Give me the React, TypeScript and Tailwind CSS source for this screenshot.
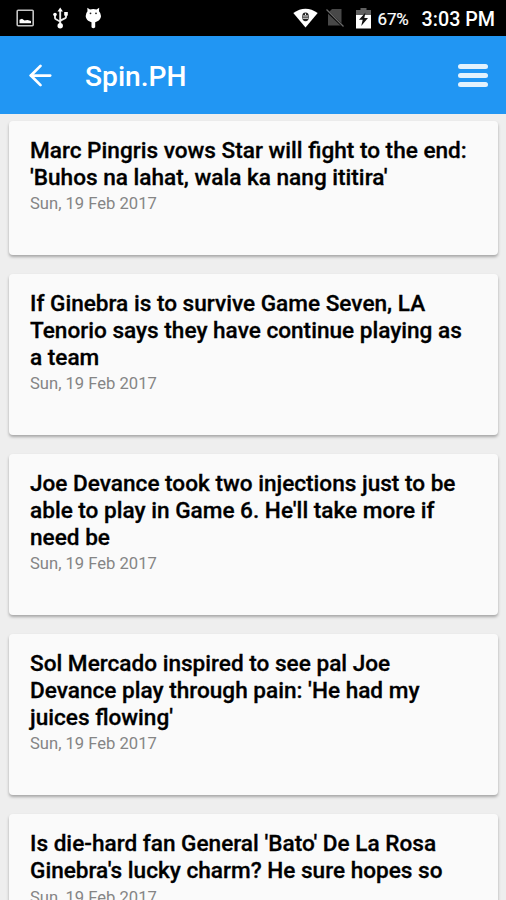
import { ArrowLeft } from "lucide-react";

type Article = {
  id: number;
  lines: string[];
  date: string;
};

const articles: Article[] = [
  {
    id: 1,
    lines: ["Marc Pingris vows Star will fight to the end:", "'Buhos na lahat, wala ka nang ititira'"],
    date: "Sun, 19 Feb 2017",
  },
  {
    id: 2,
    lines: ["If Ginebra is to survive Game Seven, LA", "Tenorio says they have continue playing as", "a team"],
    date: "Sun, 19 Feb 2017",
  },
  {
    id: 3,
    lines: ["Joe Devance took two injections just to be", "able to play in Game 6. He'll take more if", "need be"],
    date: "Sun, 19 Feb 2017",
  },
  {
    id: 4,
    lines: ["Sol Mercado inspired to see pal Joe", "Devance play through pain: 'He had my", "juices flowing'"],
    date: "Sun, 19 Feb 2017",
  },
  {
    id: 5,
    lines: ["Is die-hard fan General 'Bato' De La Rosa", "Ginebra's lucky charm? He sure hopes so"],
    date: "Sun, 19 Feb 2017",
  },
];

function StatusBar() {
  return (
    <div className="flex h-9 shrink-0 items-center bg-black pl-4 pr-[11px] text-white">
      {/* picture */}
      <svg width="19" height="18" viewBox="0 0 19 18" fill="none">
        <rect x="1.2" y="1.2" width="16" height="15.6" rx="1" stroke="#c4c4c4" strokeWidth="1.6" />
        <path d="M3.5 14.2v-3.4l2.5-1 2.5 1.7 3-.5 3.5 1v2.2z" fill="#fff" />
      </svg>

      {/* usb */}
      <svg className="ml-[17px]" width="17" height="22" viewBox="0 0 17 22" fill="none" stroke="#e8e8e8" strokeWidth="1.9">
        <path d="M8.2 3v15M3 8v3.2c0 1.3 5.2 2.5 5.2 4.3M14 7v3.2c0 1.6-5.8 2.3-5.8 4.3" />
        <path d="M8.2 .5 5.5 4.5h5.4z" fill="#fff" stroke="none" />
        <circle cx="3" cy="7.5" r="1.8" fill="#fff" stroke="none" />
        <path d="M12.2 5h3.6v3.6h-3.6z" fill="#fff" stroke="none" />
        <circle cx="8.2" cy="18.8" r="2.7" fill="#fff" stroke="none" />
      </svg>

      {/* debug head */}
      <svg className="ml-4" width="17" height="22" viewBox="0 0 17 22" fill="#fff">
        <path d="M2.3.8 5 2.5Q8.3 1.5 11.5 2.5L14.2.8 14 4.3Q16 6.3 16 9c0 3-2.6 5.3-5.8 6.3v5Q8.3 22.4 6.5 20.3v-5C3.2 14.3.7 12 .7 9Q.7 6.3 2.5 4.3z" />
        <circle cx="5.5" cy="6.3" r=".9" fill="#222" />
        <circle cx="11" cy="6.3" r=".9" fill="#222" />
      </svg>

      {/* wifi */}
      <svg className="ml-auto" width="25" height="20" viewBox="0 0 25 20">
        <path d="M.3 5Q12.5-3.6 24.7 5L12.5 19.5z" fill="#fff" />
        <ellipse cx="12.5" cy="8.8" rx="3.4" ry="4.4" fill="#222" />
        <path d="M9.7 8h5.6M9.7 10.2h5.6M12.5 5.5v1.5" stroke="#fff" strokeWidth="1" />
      </svg>

      {/* no sim */}
      <svg className="ml-[8px]" width="18" height="20" viewBox="0 0 18 20">
        <path d="M6 1h9.5v16.5H2V5z" fill="#484848" />
        <path d="M.5 2.5 17.2 18.5" stroke="#000" strokeWidth="2.4" />
        <path d="M.5 1.5 17.5 18.5" stroke="#686868" strokeWidth="1.2" />
      </svg>

      {/* battery */}
      <svg className="ml-[12px]" width="15" height="21" viewBox="0 0 15 21">
        <path d="M4.5 0h6v2H15v7H0V2h4.5z" fill="#606060" />
        <path d="M0 7h15v13.5H0z" fill="#fff" />
        <path d="M9.5 4.5 3 11.8h3.7L5.2 18 12 10H8.3z" fill="#111" />
      </svg>

      <span className="ml-[7px] mt-[3px] text-[17px] leading-none tracking-[-0.2px] [-webkit-text-stroke:0.2px_white]">67%</span>
      <span className="ml-[13px] mt-[3px] text-[19.7px] font-medium leading-none">3:03 PM</span>
    </div>
  );
}

function AppBar() {
  return (
    <header className="flex h-[78px] shrink-0 items-center bg-[#2196f3] pl-[24px] pr-[18px] text-white">
      <ArrowLeft size={33} strokeWidth={2} />
      <h1 className="ml-[28px] mt-1 text-[28.2px] font-medium leading-none">Spin.PH</h1>
      <div className="ml-auto flex flex-col gap-1">
        <span className="h-[5px] w-[30px] rounded-full bg-[#e3f2fd]" />
        <span className="h-[5px] w-[30px] rounded-full bg-[#e3f2fd]" />
        <span className="h-[5px] w-[30px] rounded-full bg-[#e3f2fd]" />
      </div>
    </header>
  );
}

function ArticleCard({ article }: { article: Article }) {
  return (
    <article className="shrink-0 rounded-[4px] bg-[#fafafa] px-[21px] pb-[39px] pt-[17px] shadow-[0_2px_3px_rgba(0,0,0,0.3)]">
      <h2 className="text-[22.6px] font-medium leading-[26.7px] text-black [-webkit-text-stroke:0.3px_black]">
        {article.lines.map((line) => (
          <span key={line} className="block whitespace-nowrap">
            {line}
          </span>
        ))}
      </h2>
      <p className="text-[16.6px] leading-[25px] text-[#858585]">{article.date}</p>
    </article>
  );
}

export default function App() {
  return (
    <div className="flex h-[900px] w-[506px] flex-col overflow-hidden bg-[#eeeeee] font-['Roboto',sans-serif]">
      <StatusBar />
      <AppBar />
      <main className="flex min-h-0 flex-1 flex-col gap-[18.9px] overflow-hidden pl-[9px] pr-2 pt-[7px]">
        {articles.map((article) => (
          <ArticleCard key={article.id} article={article} />
        ))}
      </main>
    </div>
  );
}
